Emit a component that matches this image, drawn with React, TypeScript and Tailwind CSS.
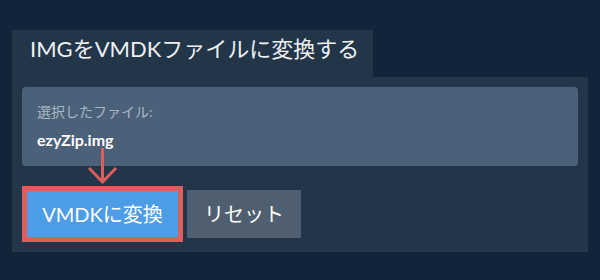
export default function App() {
  return (
    <div className="w-[600px] h-[280px] bg-[#13243a] pt-[30px] px-[12px] font-['Lato','Noto_Sans_CJK_JP',sans-serif]">
      {/* Tab header */}
      <div className="w-[361px] h-[47px] bg-[#223549] pl-[18px] pt-[5px]">
        <h1 className="text-[22px] leading-[28px] text-[#eef0f3] font-normal whitespace-nowrap">
          IMGをVMDKファイルに変換する
        </h1>
      </div>

      {/* Panel */}
      <div className="relative w-[576px] h-[175px] bg-[#223549] p-[10px]">
        <div className="h-[79px] bg-[#4b617a] rounded-[4px] px-[15px] pt-[15px]">
          <div className="text-[14px] leading-[20px] text-[#aab6c3]">選択したファイル:</div>
          <div className="text-[16px] leading-[24px] font-bold text-white mt-[6px]">ezyZip.img</div>
        </div>

        <div className="flex items-start gap-[4px] mt-[20px]">
          <div className="border-[5px] border-[#dc5f5b] w-[161px] h-[56px]">
            <button className="w-full h-full bg-[#4c9ce6] text-white text-[20px] leading-[24px] whitespace-nowrap">
              VMDKに変換
            </button>
          </div>
          <button className="mt-[4px] w-[114px] h-[48px] bg-[#4f5f6f] text-white text-[20px] leading-[24px]">
            リセット
          </button>
        </div>

        {/* Arrow pointing at the convert button */}
        <svg className="absolute left-[76px] top-[71px]" width="30" height="36" viewBox="0 0 30 36">
          <line x1="14.5" y1="0" x2="14.5" y2="34" stroke="#dc5f5b" strokeWidth="3" />
          <polyline points="1,20 14.5,34 28,20" fill="none" stroke="#dc5f5b" strokeWidth="3" />
        </svg>
      </div>
    </div>
  )
}
